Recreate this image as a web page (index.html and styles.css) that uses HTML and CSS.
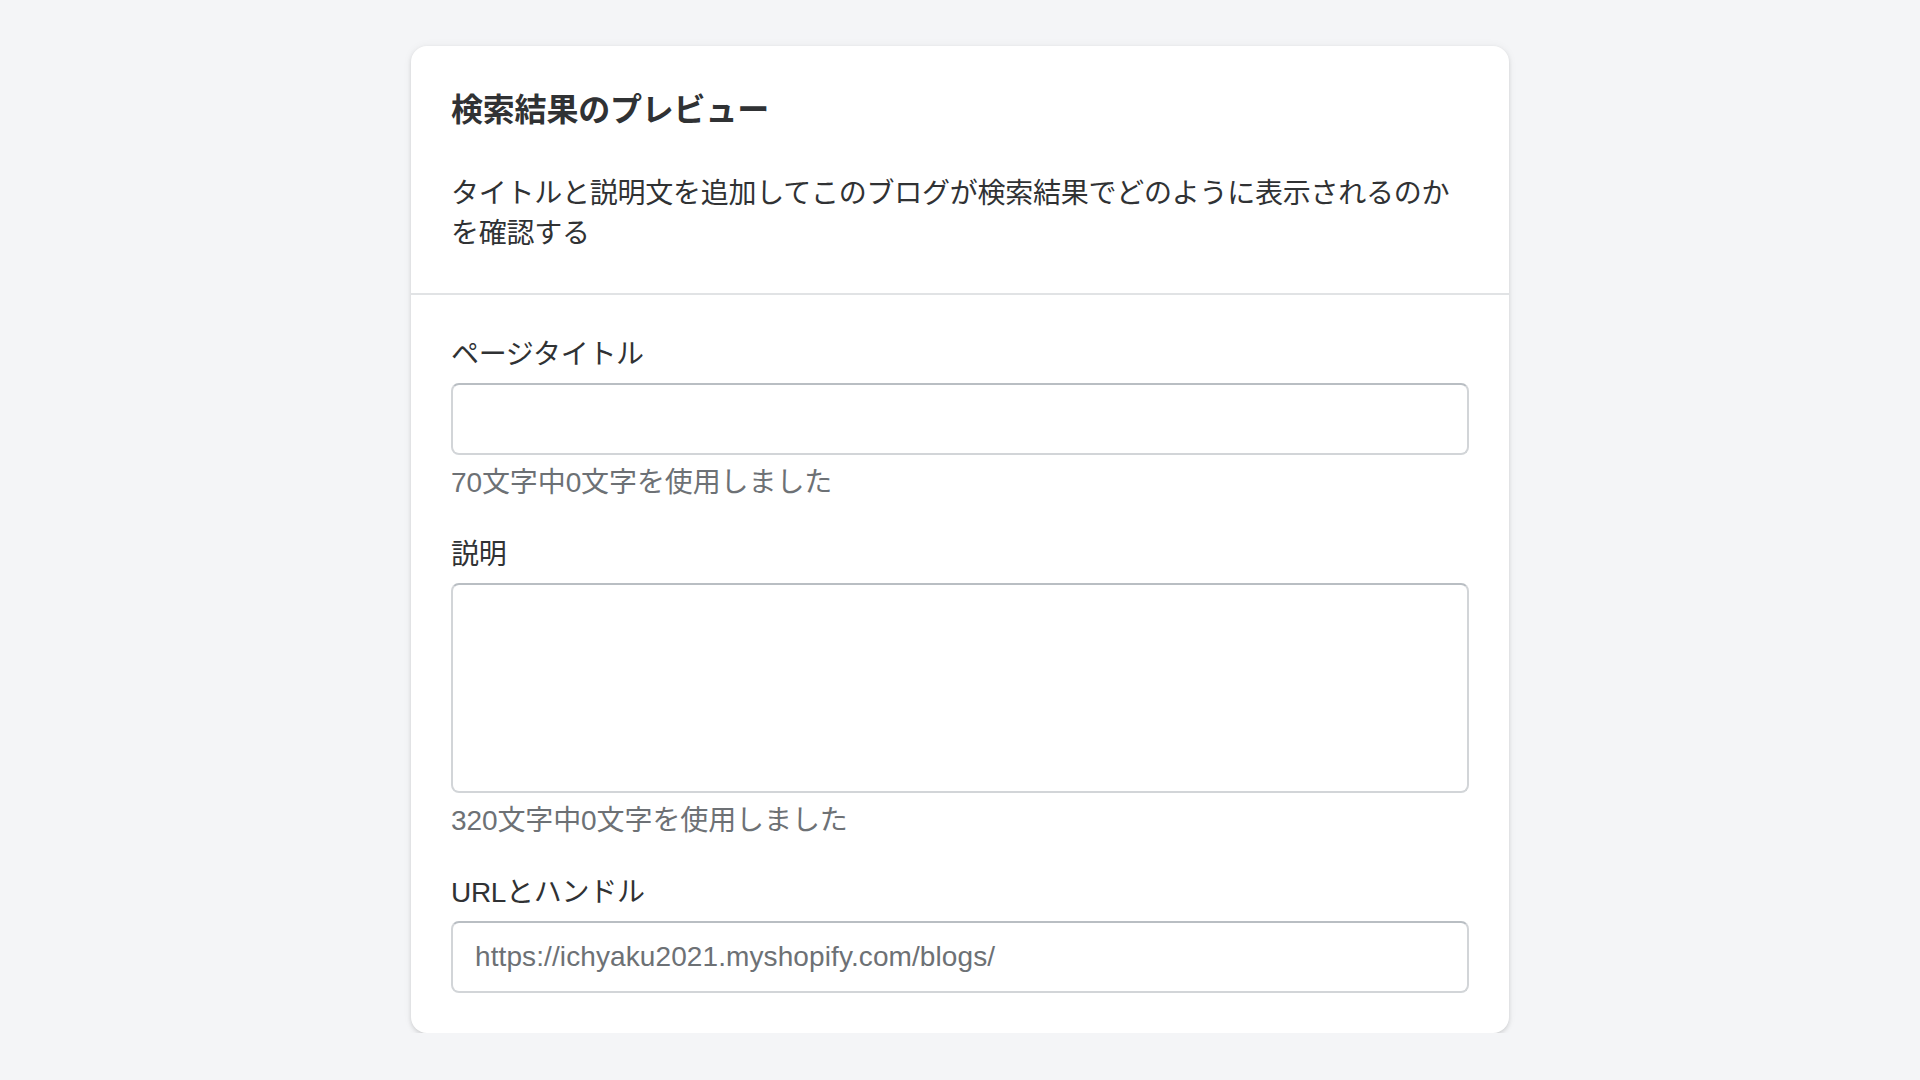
FILE: index.html
```html
<!DOCTYPE html>
<html lang="ja">
<head>
<meta charset="utf-8">
<title>検索結果のプレビュー</title>
<link rel="stylesheet" href="styles.css">
</head>
<body>
<main class="page">
  <section class="card">
    <div class="card-section header">
      <h2 class="card-title">検索結果のプレビュー</h2>
      <p class="card-desc">タイトルと説明文を追加してこのブログが検索結果でどのように表示されるのかを確認する</p>
    </div>
    <div class="card-section form">
      <div class="field">
        <label class="label">ページタイトル</label>
        <div class="input"></div>
        <div class="help">70文字中0文字を使用しました</div>
      </div>
      <div class="field">
        <label class="label">説明</label>
        <div class="input textarea"></div>
        <div class="help">320文字中0文字を使用しました</div>
      </div>
      <div class="field">
        <label class="label">URLとハンドル</label>
        <div class="input"><span class="prefix">https://ichyaku2021.myshopify.com/blogs/</span></div>
      </div>
    </div>
  </section>
</main>
</body>
</html>
```
FILE: styles.css
```css
html, body {
  margin: 0;
  padding: 0;
  background: #f4f5f7;
}
body {
  font-family: "Liberation Sans", "Noto Sans CJK JP", sans-serif;
  color: #202223;
  font-size: 28px;
  line-height: 40px;
}
.page {
  padding-top: 46px;
  display: flex;
  justify-content: center;
}
.card {
  width: 1098px;
  background: #ffffff;
  border-radius: 16px;
  box-shadow: 0 0 10px rgba(23, 24, 24, 0.05), 0 2px 4px rgba(0, 0, 0, 0.13);
}
.card-section {
  padding: 40px;
}
.header {
  border-bottom: 2px solid #e1e3e5;
  padding-bottom: 39px;
}
.card-title {
  margin: 0;
  font-size: 32px;
  line-height: 48px;
  font-weight: 700;
  letter-spacing: -0.2px;
  color: #303234;
}
.card-desc {
  margin: 40px 0 0;
  padding-right: 10px;
  letter-spacing: -0.25px;
  color: #303234;
}
.form {
  display: flex;
  flex-direction: column;
  gap: 32px;
}
.field {
  display: flex;
  flex-direction: column;
}
.label {
  display: block;
  margin-bottom: 8px;
  letter-spacing: -0.3px;
  color: #303234;
}
.input {
  box-sizing: border-box;
  height: 72px;
  border: 2px solid #d2d5d8;
  border-top-color: #b9bec3;
  border-radius: 8px;
  padding: 0 22px;
  display: flex;
  align-items: center;
  background: #fff;
}
.textarea {
  height: 210px;
}
.prefix {
  color: #6d7175;
  letter-spacing: 0.1px;
}
.help {
  margin-top: 8px;
  color: #6d7175;
  letter-spacing: -0.1px;
}
```
